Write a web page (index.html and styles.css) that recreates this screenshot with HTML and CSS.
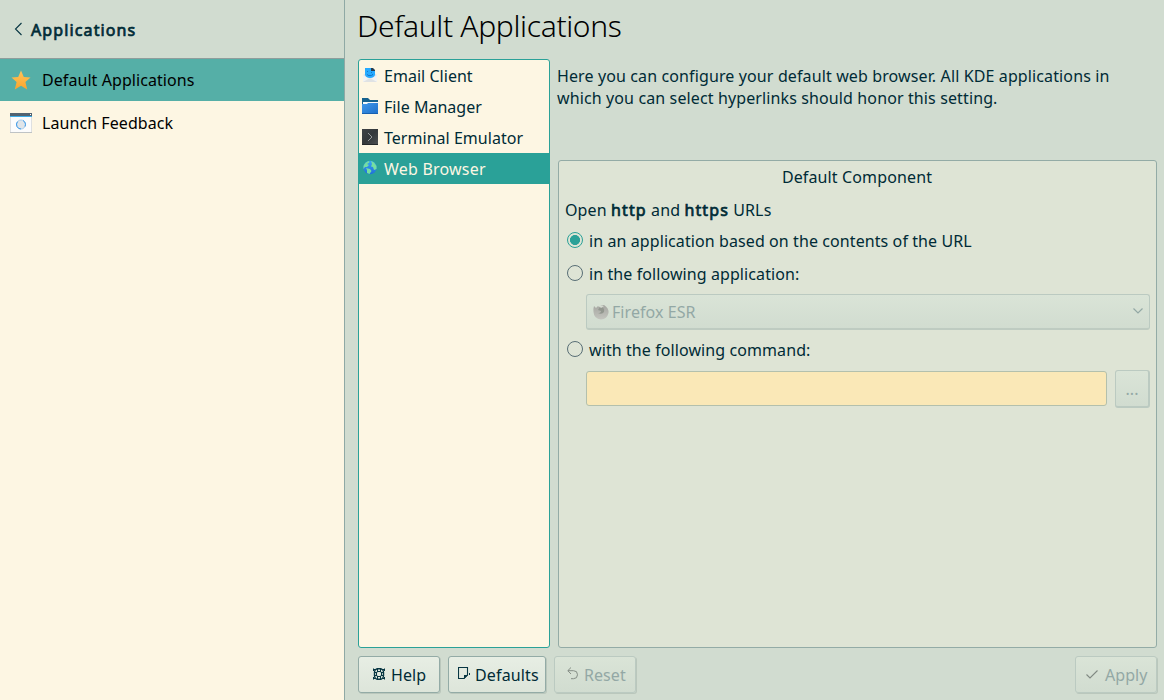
FILE: index.html
```html
<!DOCTYPE html>
<html lang="en">
<head>
<meta charset="utf-8">
<title>Default Applications</title>
<link rel="stylesheet" href="styles.css">
</head>
<body>
<aside class="sidebar">
  <header class="back">
    <svg width="10" height="14" viewBox="0 0 10 14"><path d="M8.500 1 L2.500 7 L8.500 13" fill="none" stroke="#073642" stroke-width="1.1"/></svg>
    <span class="strong">Applications</span>
  </header>
  <div class="nav-item active">
    <svg width="22" height="22" viewBox="0 0 22 22"><defs><linearGradient id="star" x2="0" y2="1"><stop stop-color="#ffc35a"/><stop offset="1" stop-color="#faa52c"/></linearGradient></defs><path d="M11 1.500 L13.800 8 L20.500 8.400 L15.400 13 L17.200 20.500 L11 16.700 L4.800 20.500 L6.600 13 L1.500 8.400 L8.200 8 Z" fill="url(#star)"/></svg>
    <span>Default Applications</span>
  </div>
  <div class="nav-item">
    <svg width="22" height="22" viewBox="0 0 22 22"><path d="M0 1H22V21H0Z" fill="#bfc3c5"/><path d="M.5 4H21.500V20H.5Z" fill="#fcfcfc"/><path d="M0 1H22V4H0Z" fill="#536370"/><path d="M0 4H22V5H0Z" fill="#3daee9"/><path d="M20 2H21V3H20Z" fill="#fff"/><circle cx="11" cy="12.500" r="4.500" fill="#e0e5e9" stroke="#a9cdec"/><path d="M11 17 A4.500 4.500 0 0 1 7.500 9.700 M13 8.500 A4.500 4.500 0 0 1 15 14.500" fill="none" stroke="#3d9be9"/></svg>
    <span>Launch Feedback</span>
  </div>
</aside>
<main class="main">
  <h1 class="title">Default Applications</h1>
  <div class="content">
    <ul class="list">
      <li class="row"><svg width="16" height="16" viewBox="0 0 16 16"><path d="M1 8L4 6H12L15 8V15H1Z" fill="#e3e5e7"/><path d="M3 1H10L13 4V8Q12 11 8 11Q4 11 3 8Z" fill="#27aaff"/><path d="M9 1H11L13 3V4H9Z" fill="#263c50"/><path d="M5 4H6V5H5ZM9 5H10V6H9ZM5 7H6V8H10V7H11V8L9 9H6Z" fill="#1678cd"/><path d="M1 8L4 10Q8 13 12 10L15 8V15H1Z" fill="#f2f3f4"/><path d="M1 15L8 11L15 15Z" fill="#dfe2e4"/></svg><span>Email Client</span></li>
      <li class="row"><svg width="16" height="16" viewBox="0 0 16 16"><defs><linearGradient id="folder" x2="1" y2="1"><stop stop-color="#4198ea"/><stop offset="1" stop-color="#1e6fca"/></linearGradient></defs><path d="M0 0H6L8 2H16V7H0Z" fill="#16618e"/><path d="M1 4H16V8H1Z" fill="#f5f8fa"/><path d="M0 6H5L6 5H16V16H0Z" fill="url(#folder)"/><path d="M0 15.500H16" stroke="#1760b0"/></svg><span>File Manager</span></li>
      <li class="row"><svg width="16" height="16" viewBox="0 0 16 16"><defs><linearGradient id="term" x2="1" y2="1"><stop stop-color="#3e4245"/><stop offset=".5" stop-color="#34383b"/><stop offset="1" stop-color="#4d5154"/></linearGradient></defs><path d="M0 0H16V16H0Z" fill="url(#term)"/><path d="M0 15.500H16" stroke="#24282b"/><path d="M6 4L10 8L6 12" fill="none" stroke="#aeb2b4" stroke-width=".8"/></svg><span>Terminal Emulator</span></li>
      <li class="row selected"><svg width="16" height="16" viewBox="0 0 16 16"><defs><linearGradient id="globe" x2="0" y2="1"><stop stop-color="#38a5f5"/><stop offset="1" stop-color="#216fd8"/></linearGradient></defs><circle cx="8" cy="7.500" r="6.700" fill="url(#globe)"/><path d="M1.500 6Q3 2 7 1L7.500 2.500L5 4L7 5L5 7L3 7L1.500 9Z M4 8L8 9L9.500 11L7.500 14L5 13L5 10Z M9 1L12 2.500L14.500 6L14.500 9L12 10L11 7L9 6.500L10 4Z" fill="#75dfa0"/></svg><span>Web Browser</span></li>
    </ul>
    <section class="detail">
      <p class="intro">Here you can configure your default web browser. All KDE applications in<br>which you can select hyperlinks should honor this setting.</p>
      <div class="group">
        <h2 class="group-title">Default Component</h2>
        <p class="open">Open <span class="strong">http</span> and <span class="strong">https</span> URLs</p>
        <label class="option first"><i class="radio checked"></i><span>in an application based on the contents of the URL</span></label>
        <label class="option second"><i class="radio"></i><span>in the following application:</span></label>
        <div class="combo">
          <svg width="16" height="16" viewBox="0 0 16 16"><defs><linearGradient id="fox" x2="0" y2="1"><stop stop-color="#a5a6a1"/><stop offset="1" stop-color="#c4c5bf"/></linearGradient></defs><path d="M1 2L3 4L5 2L6 3Q8 1 11 1Q16 4 15.500 9Q14 15 8 15.500Q1 15 .5 8Q0 5 1 2Z" fill="url(#fox)"/><path d="M7 3Q12 3 11 8Q9 11 5 9Q8 9 8 7L5 6Z" fill="#92978f"/><path d="M6 2Q9 1 11 2L8 4Z" fill="#d5dad1"/></svg>
          <span>Firefox ESR</span>
          <svg class="arrow" width="10" height="6" viewBox="0 0 10 6"><path d="M.5 .5L5 5L9.500 .5" fill="none" stroke="#93a8a5" stroke-width="1.200"/></svg>
        </div>
        <label class="option third"><i class="radio"></i><span>with the following command:</span></label>
        <div class="command"><div class="field"></div><button class="browse" disabled>...</button></div>
      </div>
    </section>
  </div>
  <footer class="footer">
    <button class="btn help"><svg width="12" height="12" viewBox="0 0 12 12" fill="none" stroke="#073642"><rect x="1.500" y=".7" width="9" height="10.600" rx="3.500" stroke-width="1.400"/><rect x="3.500" y="3.500" width="5" height="5" rx="1.500"/><path d="M4.500 0V4M7.500 0V4M4.500 8V12M7.500 8V12M1 4.500H4M1 7.500H4M8 4.500H11M8 7.500H11M.5 .5V3M11.500 .5V3M.5 9V11.500M11.500 9V11.500M.5 1.500H3M9 1.500H11.500M.5 10.500H3M9 10.500H11.500"/></svg><span>Help</span></button>
    <button class="btn defaults"><svg width="13" height="13" viewBox="0 0 13 13"><path d="M.5 .5H9.500V8L6 11.500H.5Z" fill="none" stroke="#073642" stroke-width="1.100"/><path d="M10 7V8L6 12V8H9Z M11 6H12V8H11Z" fill="#073642"/></svg><span>Defaults</span></button>
    <button class="btn reset" disabled><svg width="12" height="13" viewBox="0 0 12 13"><path d="M4 .5L.8 3.700L4 7M1 3.700H6.500A4 4 0 0 1 6.500 11.700H4" fill="none" stroke="#848d85"/></svg><span>Reset</span></button>
    <button class="btn apply" disabled><svg width="12" height="10" viewBox="0 0 12 10"><path d="M.5 5.500L4 9L11.500 1.500" fill="none" stroke="#808982" stroke-width="1.100"/></svg><span>Apply</span></button>
  </footer>
</main>
</body>
</html>
```
FILE: styles.css
```css
* { box-sizing: border-box; }
body { margin: 0; width: 1164px; height: 700px; overflow: hidden; display: flex; background: #d1dcd0; color: #002b36; font: 16px/22px "Noto Sans", sans-serif; letter-spacing: .07px; }
h1, h2, p, ul { margin: 0; padding: 0; font-weight: 400; }
svg { display: block; flex: none; }
span { white-space: nowrap; }
.strong { font-weight: 400; letter-spacing: 1.12px; -webkit-text-stroke: .7px #002b36; }

.sidebar { width: 345px; border-right: 1px solid #8fa9a5; background: #fdf6e3; }
.back { height: 59px; display: flex; align-items: center; padding: 1px 13px 0; gap: 8px; background: #d1dcd0; border-bottom: 1px solid #8f9e9c; }
.back svg { margin-top: -2px; }
.nav-item { height: 43px; display: flex; align-items: center; gap: 10px; padding-left: 10px; color: #000; }
.nav-item.active { height: 42px; background: #55afa7; }

.main { flex: 1; padding: 0 7px 0 13px; display: flex; flex-direction: column; }
.title { height: 59px; padding-top: 5px; margin-left: -1px; font-size: 30px; line-height: 42px; font-weight: 300; letter-spacing: -.35px; color: #000; }
.content { height: 589px; display: flex; gap: 8px; }
.list { width: 192px; list-style: none; background: #fdf6e3; border: 1px solid #2aa198; border-radius: 3px; letter-spacing: .03px; }
.row { height: 31px; display: flex; align-items: center; gap: 6px; padding-left: 3px; }
.row svg { margin-top: -2px; }
.row.selected { background: #2aa198; color: #fdf6e3; letter-spacing: .2px; }

.detail { flex: 1; display: flex; flex-direction: column; }
.intro { height: 101px; padding-top: 6px; margin-left: -1px; letter-spacing: .12px; }
.group { flex: 1; border: 1px solid #93aba6; border-radius: 3px; background: #dee4d5; padding: 5px 6px 0 6px; }
.group-title { font-size: 16px; line-height: 22px; text-align: center; letter-spacing: .13px; padding-right: 1px; }
.open { margin-top: 11px; letter-spacing: .12px; }
.option { display: flex; align-items: center; gap: 6px; height: 22px; padding-left: 2px; letter-spacing: .09px; }
.option.first { margin-top: 9px; }
.option.second { margin-top: 11px; }
.option.third { margin-top: 9px; }
.radio { width: 16px; height: 16px; margin-top: -2px; border: 1px solid #586e75; border-radius: 50%; }
.radio.checked { border-color: #2aa198; background: radial-gradient(circle, #2aa198 0 4.700px, transparent 5.300px); }
.combo { height: 36px; margin: 9px 0 0 21px; padding: 0 6px 0 6px; display: flex; align-items: center; gap: 3px; border: 1px solid #bbcac1; border-bottom: 2px solid #becbc1; border-radius: 3px; background: linear-gradient(#dae4d7, #d1dcd0); color: #93a8a5; }
.combo span { padding-top: 1px; }
.combo .arrow { margin-left: auto; margin-top: -2px; }
.command { display: flex; gap: 8px; margin: 9px 0 0 21px; }
.field { flex: 1; height: 35px; margin-top: 1px; background: #fae8b7; border: 1px solid #b3c0ad; border-radius: 3px; }
.browse { width: 35px; height: 38px; padding: 1px 0 0; color: #93a8a5; font: inherit; background: linear-gradient(#dae4d7, #d1dcd0); border: 1px solid #bbcac1; border-bottom-width: 2px; border-right-width: 2px; border-radius: 3px; }

.footer { display: flex; gap: 8px; padding-top: 8px; }
.btn { height: 37px; display: flex; align-items: center; gap: 6px; padding: 0 0 0 14px; font: inherit; letter-spacing: inherit; color: #002b36; background: linear-gradient(#e7eee4, #dde5da); border: 1px solid #93aba6; border-radius: 3px; box-shadow: 1px 1px 0 #bac7bc; }
.btn svg { margin-top: -2px; }
.btn:disabled { color: #93a8a5; background: linear-gradient(#dae4d7, #d1dcd0); border-color: #bbcac1; }
.help { width: 82px; }
.defaults { width: 98px; padding-left: 9px; gap: 4px; letter-spacing: .15px; }
.reset { width: 82px; padding-left: 12px; gap: 5px; }
.apply { width: 82px; margin-left: auto; padding-left: 10px; gap: 7px; }
```
